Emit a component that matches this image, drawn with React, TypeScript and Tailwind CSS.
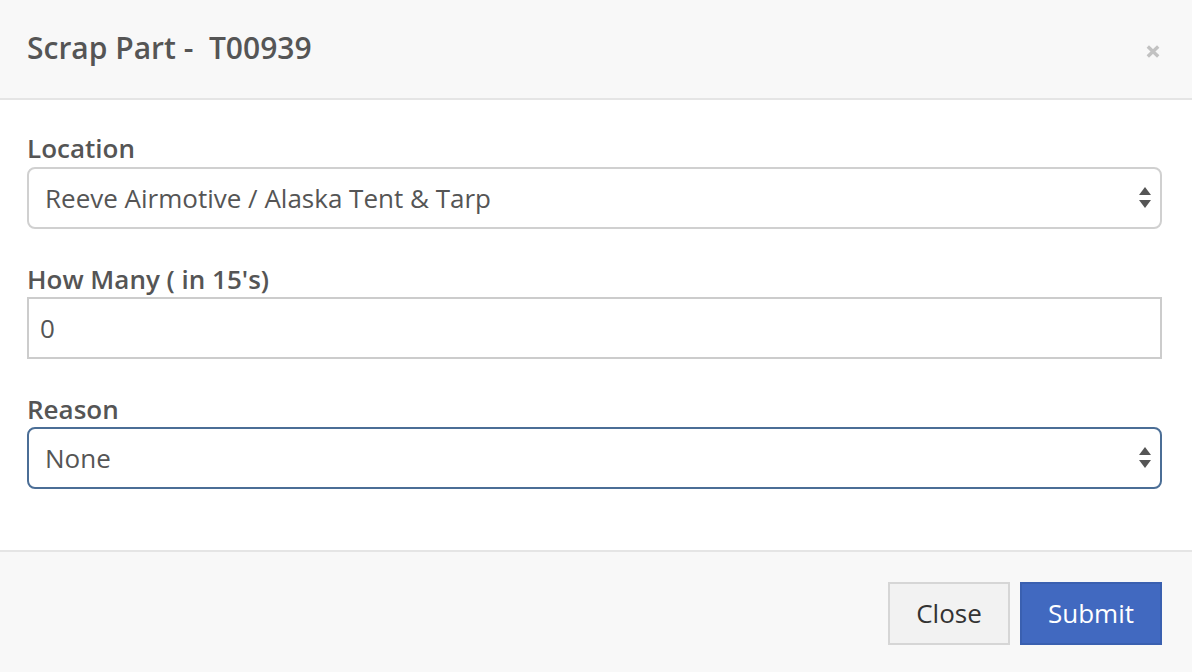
import React from "react";

function Arrows() {
  return (
    <svg width="12" height="22" viewBox="0 0 12 22" className="absolute right-[9px] top-1/2 -translate-y-1/2" aria-hidden>
      <polygon points="6,0 12,8 0,8" fill="#555" />
      <polygon points="0,13 12,13 6,21" fill="#555" />
    </svg>
  );
}

export default function App() {
  return (
    <div className="w-[1192px] h-[672px] bg-white flex flex-col text-[#555]" style={{ fontFamily: '"Open Sans", "Liberation Sans", sans-serif' }}>
      <div className="h-[100px] bg-[#f8f8f8] border-b-2 border-[#e5e5e5] flex items-start justify-between pl-[27px] pr-[32px] shrink-0">
        <h4 className="pt-[31px] text-[30px] leading-[33px] font-semibold text-[#555] whitespace-pre">Scrap Part -  T00939</h4>
        <button className="mt-[45px]" aria-label="close">
          <svg width="14" height="13" viewBox="0 0 14 13">
            <path d="M1.8 1.5 L12.2 11.5 M12.2 1.5 L1.8 11.5" stroke="#c2c2c2" strokeWidth="3.4" strokeLinecap="butt" />
          </svg>
        </button>
      </div>
      <div className="px-[27px] pt-[31px] pb-[61px] flex flex-col gap-[33px] shrink-0">
        <div className="flex flex-col">
          <label className="text-[26px] leading-[34px] font-semibold">Location</label>
          <div className="relative mt-[2px] h-[62px] w-[1135px] border-2 border-[#d0d0d0] rounded-[8px] flex items-center pl-[16px] text-[26px]">
            Reeve Airmotive / Alaska Tent &amp; Tarp
            <Arrows />
          </div>
        </div>
        <div className="flex flex-col">
          <label className="text-[26px] leading-[34px] font-semibold">How Many ( in 15's)</label>
          <div className="h-[62px] mt-px w-[1135px] border-2 border-[#cccccc] flex items-center pl-[11px] text-[26px]">0</div>
        </div>
        <div className="flex flex-col">
          <label className="text-[26px] leading-[34px] font-semibold">Reason</label>
          <div className="relative mt-px h-[62px] w-[1135px] border-2 border-[#4b6e96] rounded-[8px] flex items-center pl-[16px] text-[26px]">
            None
            <Arrows />
          </div>
        </div>
      </div>
      <div className="flex-1 bg-[#f8f8f8] border-t-2 border-[#e5e5e5] flex justify-end items-start pt-[30px] pr-[30px] gap-[10px]">
        <button className="h-[63px] w-[122px] bg-[#f2f2f2] border-2 border-[#d6d6d6] text-[#333] text-[26px] flex items-center justify-center">Close</button>
        <button className="h-[63px] w-[142px] bg-[#4169c0] border-2 border-[#3a60b0] text-white text-[26px] flex items-center justify-center">Submit</button>
      </div>
    </div>
  );
}
